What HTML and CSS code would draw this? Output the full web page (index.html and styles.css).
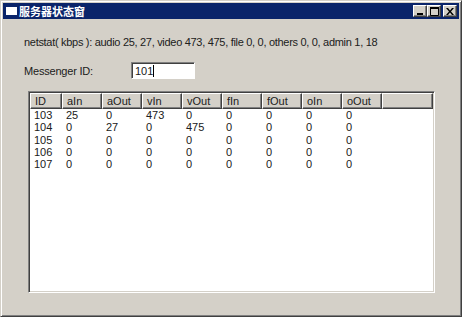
FILE: index.html
```html
<!DOCTYPE html>
<html lang="zh">
<head>
    <meta charset="UTF-8">
    <title>服务器状态窗</title>
    <link rel="stylesheet" href="styles.css">
</head>
<body>
    <div class="window">
        <div class="titlebar">
            <span class="app-icon"></span>
            <span class="title">服务器状态窗</span>
            <div class="caption-buttons">
                <span class="cap-btn">
                    <svg width="8" height="8" viewBox="0 0 8 8"><rect x="1" y="6" width="6" height="2" fill="#000"/></svg>
                </span>
                <span class="cap-btn">
                    <svg width="9" height="9" viewBox="0 0 9 9"><path d="M0.5 0.5h8v8h-8z" fill="none" stroke="#000"/><rect x="0" y="0" width="9" height="2" fill="#000"/></svg>
                </span>
                <span class="cap-btn close">
                    <svg width="8" height="7" viewBox="0 0 8 7"><path d="M0 0h2l2 2.5 2-2.5h2l-3 3.5 3 3.5h-2l-2-2.5-2 2.5h-2l3-3.5z" fill="#000"/></svg>
                </span>
            </div>
        </div>
        <div class="client">
            <div class="netstat">netstat( kbps ): audio 25, 27, video 473, 475, file 0, 0, others 0, 0, admin 1, 18</div>
            <div class="id-row">
                <label class="id-label">Messenger ID:</label>
                <div class="id-input">101<span class="caret"></span></div>
            </div>
            <div class="listview">
                <div class="lv-header">
                    <div class="hcell w-id">ID</div>
                    <div class="hcell">aIn</div>
                    <div class="hcell">aOut</div>
                    <div class="hcell">vIn</div>
                    <div class="hcell">vOut</div>
                    <div class="hcell">fIn</div>
                    <div class="hcell">fOut</div>
                    <div class="hcell">oIn</div>
                    <div class="hcell">oOut</div>
                    <div class="hcell filler"></div>
                </div>
                <div class="lv-body" id="lvBody"></div>
            </div>
        </div>
    </div>

    <script type="text/javascript">
        var rows = [
            ["103", "25", "0", "473", "0", "0", "0", "0", "0"],
            ["104", "0", "27", "0", "475", "0", "0", "0", "0"],
            ["105", "0", "0", "0", "0", "0", "0", "0", "0"],
            ["106", "0", "0", "0", "0", "0", "0", "0", "0"],
            ["107", "0", "0", "0", "0", "0", "0", "0", "0"]
        ];

        var body = document.getElementById("lvBody");
        for (var i = 0; i < rows.length; i++) {
            var row = document.createElement("div");
            row.className = "lv-row";
            for (var j = 0; j < rows[i].length; j++) {
                var cell = document.createElement("div");
                cell.className = j == 0 ? "cell w-id" : "cell";
                cell.textContent = rows[i][j];
                row.appendChild(cell);
            }
            body.appendChild(row);
        }
    </script>
</body>
</html>
```

FILE: styles.css
```css
body {
    margin: 0;
    background-color: #FFFFFF;
    font-family: "Liberation Sans", "Noto Sans CJK SC", sans-serif;
    font-size: 11px;
    color: #000000;
}
.window {
    width: 462px;
    height: 317px;
    box-sizing: border-box;
    background-color: #D4D0C8;
    border: 1px solid;
    border-color: #D4D0C8 #404040 #404040 #D4D0C8;
    box-shadow: inset 1px 1px #FFFFFF, inset -1px -1px #808080;
    padding: 2px;
    display: flex;
    flex-direction: column;
}
.titlebar {
    height: 16px;
    background-color: #0A246A;
    display: flex;
    align-items: center;
    padding: 0 2px 0 3px;
}
.app-icon {
    width: 11px;
    height: 8px;
    background-color: #FFFFFF;
    margin-right: 2px;
}
.title {
    color: #FFFFFF;
    font-family: "Noto Sans CJK SC", sans-serif;
    font-weight: bold;
    font-size: 11px;
    line-height: 11px;
}
.caption-buttons {
    margin-left: auto;
    display: flex;
}
.cap-btn {
    width: 14px;
    height: 12px;
    box-sizing: border-box;
    background-color: #D4D0C8;
    border: 1px solid;
    border-color: #FFFFFF #404040 #404040 #FFFFFF;
    box-shadow: inset -1px -1px #808080;
    display: flex;
    align-items: center;
    justify-content: center;
}
.cap-btn.close {
    margin-left: 2px;
}
.client {
    padding: 17px 0 0 21px;
    color: #202020;
}
.netstat {
    height: 13px;
    line-height: 13px;
    letter-spacing: -0.3px;
}
.id-row {
    display: flex;
    align-items: center;
    margin-top: 13px;
    height: 17px;
}
.id-label {
    width: 107px;
    letter-spacing: -0.2px;
}
.id-input {
    width: 64px;
    height: 17px;
    box-sizing: border-box;
    background-color: #FFFFFF;
    border: 1px solid;
    border-color: #808080 #FFFFFF #FFFFFF #808080;
    box-shadow: inset 1px 1px #404040;
    padding: 2px 0 0 3px;
    line-height: 12px;
    display: flex;
}
.caret {
    width: 1px;
    height: 12px;
    background-color: #000000;
}
.listview {
    margin: 12px 0 0 4px;
    width: 407px;
    height: 202px;
    box-sizing: border-box;
    background-color: #FFFFFF;
    border: 1px solid;
    border-color: #808080 #FFFFFF #FFFFFF #808080;
    box-shadow: inset 1px 1px #404040, inset -1px -1px #D4D0C8;
    padding: 1px;
}
.lv-header {
    display: flex;
    height: 16px;
}
.hcell {
    flex: none;
    width: 40px;
    box-sizing: border-box;
    background-color: #D4D0C8;
    border: 1px solid;
    border-color: #FFFFFF #404040 #404040 #FFFFFF;
    box-shadow: inset -1px -1px #808080;
    padding: 1px 0 0 4px;
    line-height: 12px;
}
.hcell.filler {
    flex: 1;
}
.lv-row {
    display: flex;
    height: 12.3px;
    line-height: 12px;
}
.cell {
    flex: none;
    width: 40px;
    padding-left: 4px;
    box-sizing: border-box;
    text-align: left;
}
.hcell.w-id,
.cell.w-id {
    width: 32px;
}
```
